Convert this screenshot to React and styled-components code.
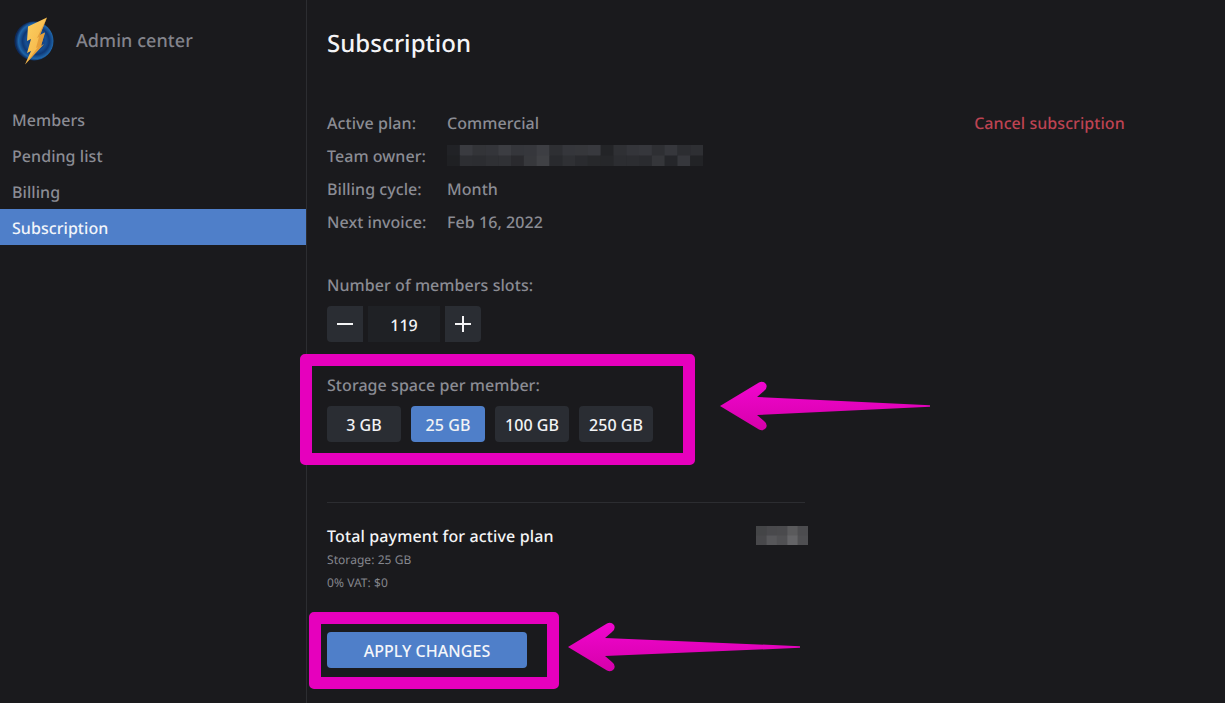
import React from 'react';
import styled, { createGlobalStyle } from 'styled-components';

const GlobalStyle = createGlobalStyle`
  html, body {
    margin: 0;
    padding: 0;
    height: 100%;
    background: #1a1a1d;
  }
  * {
    box-sizing: border-box;
  }
`;

const Page = styled.div`
  position: relative;
  display: flex;
  width: 1225px;
  height: 703px;
  overflow: hidden;
  background: #1a1a1d;
  color: #8b8c94;
  font-family: 'Noto Sans', 'Open Sans', sans-serif;
  font-size: 16px;
  font-weight: 500;
  letter-spacing: 0.06px;
  text-rendering: geometricPrecision;
`;

const Sidebar = styled.aside`
  width: 307px;
  flex: none;
  border-right: 1px solid #2c2d31;
`;

const Brand = styled.div`
  display: flex;
  align-items: center;
  gap: 20px;
  height: 101px;
  padding: 0 0 20px 12px;
`;

const BrandName = styled.span`
  font-size: 18px;
  color: #83848c;
`;

const NavItem = styled.div`
  height: 36px;
  line-height: 38px;
  padding-left: 12px;
  background: ${(p) => (p.$active ? '#4f7fc9' : 'transparent')};
  color: ${(p) => (p.$active ? '#f2f5fa' : '#8b8c94')};
`;

const Main = styled.main`
  position: relative;
  flex: 1;
  padding: 28px 0 0 20px;
`;

const Title = styled.h1`
  margin: 0 0 46px;
  font-size: 24px;
  line-height: 32px;
  font-weight: 500;
  color: #f4f4f6;
`;

const InfoRow = styled.div`
  display: flex;
  align-items: center;
  height: 33px;
`;

const InfoLabel = styled.span`
  width: 120px;
`;

const CancelLink = styled.a`
  margin-left: 435px;
  color: #bd4352;
`;

const SectionLabel = styled.div`
  height: 24px;
  line-height: 24px;
  margin-bottom: 9px;
`;

const Slots = styled.section`
  margin-top: 35px;
`;

const Stepper = styled.div`
  display: flex;
  gap: 5px;
`;

const StepButton = styled.button`
  display: flex;
  align-items: center;
  justify-content: center;
  width: 36px;
  height: 36px;
  padding: 0;
  border: none;
  background: #2a2d33;
  border-radius: ${(p) => (p.$side === 'left' ? '4px 0 0 4px' : '0 4px 4px 0')};
`;

const StepValue = styled.div`
  width: 72px;
  height: 36px;
  line-height: 38px;
  text-align: center;
  background: #1f2125;
  color: #f4f4f6;
`;

const Storage = styled.section`
  margin-top: 31px;
`;

const SizeRow = styled.div`
  display: flex;
  gap: 10px;
`;

const SizeButton = styled.button`
  width: 74px;
  height: 36px;
  padding: 2px 0 0;
  border: none;
  border-radius: 4px;
  font: inherit;
  letter-spacing: inherit;
  color: #f2f3f5;
  background: ${(p) => (p.$active ? '#4f7fc9' : '#2a2d33')};
`;

const Divider = styled.hr`
  width: 478px;
  height: 1px;
  margin: 60px 0 0;
  border: none;
  background: #2c2d31;
`;

const Total = styled.section`
  display: flex;
  justify-content: space-between;
  width: 481px;
  margin-top: 21px;
`;

const TotalTitle = styled.div`
  height: 24px;
  line-height: 24px;
  letter-spacing: 0.14px;
  color: #f4f4f6;
`;

const SmallLine = styled.div`
  height: 23px;
  line-height: 23px;
  font-size: 12px;
  font-weight: 400;
  color: #85868d;
`;

const ApplyButton = styled.button`
  display: block;
  width: 200px;
  height: 36px;
  margin-top: 38px;
  padding: 2px 0 0;
  border: none;
  border-radius: 4px;
  background: #4f7fc9;
  color: #f4f6fa;
  font: inherit;
  letter-spacing: inherit;
`;

const PriceSlot = styled.div`
  flex: none;
  padding-top: 2px;
`;

const Callout = styled.div`
  position: absolute;
  left: ${(p) => p.$x}px;
  top: ${(p) => p.$y}px;
  width: ${(p) => p.$w}px;
  height: ${(p) => p.$h}px;
  border: 12px solid #e600bd;
  border-radius: 5px;
  pointer-events: none;
`;

const ArrowMark = styled.svg`
  position: absolute;
  left: ${(p) => p.$x}px;
  top: ${(p) => p.$y}px;
`;

const Pixels = styled.svg`
  display: block;
  flex: none;
`;

const ownerPixels = [
  ['#212226', '#3a3b40', '#333438', '#34353a', '#3c3d42', '#35363b', '#36373c', '#3d3e43', '#2e2f33', '#35363b', '#36373b', '#38393e', '#232427', '#2f3034', '#34353a', '#36373c', '#2e2f33', '#36373c', '#2c2d31', '#2e2f33'],
  ['#1f2023', '#2d2e32', '#2c2d31', '#2f3034', '#303135', '#2a2a2e', '#37383c', '#404145', '#292a2e', '#2f3034', '#2a2b2f', '#27282b', '#26272a', '#2c2d31', '#2c2d31', '#2a2b2f', '#35363a', '#25262a', '#36373c', '#222326'],
];

const pricePixels = [
  ['#444547', '#49494c', '#4a4a4d', '#5a5a5c', '#4c4c4f'],
  ['#48484b', '#57575a', '#505053', '#646467', '#4f4f52'],
];

const PixelBlock = ({ rows, width, height }) => {
  const cols = rows[0].length;
  const cw = width / cols;
  const ch = height / rows.length;
  return (
    <Pixels width={width} height={height}>
      {rows.map((row, y) =>
        row.map((fill, x) => (
          <rect key={`${x}-${y}`} x={x * cw} y={y * ch} width={cw + 0.5} height={ch + 0.5} fill={fill} />
        ))
      )}
    </Pixels>
  );
};

const Logo = () => (
  <svg width="44" height="48" viewBox="0 0 44 48">
    <defs>
      <radialGradient id="globe" cx="0.55" cy="0.5" r="0.52">
        <stop offset="0" stopColor="#0c2a66" />
        <stop offset="0.5" stopColor="#174f93" />
        <stop offset="0.66" stopColor="#0f3875" />
        <stop offset="0.86" stopColor="#1f66aa" />
        <stop offset="1" stopColor="#0d2a5c" />
      </radialGradient>
      <linearGradient id="bolt" x1="0" y1="0" x2="1" y2="1">
        <stop offset="0" stopColor="#fcd263" />
        <stop offset="1" stopColor="#f3ad42" />
      </linearGradient>
    </defs>
    <circle cx="22" cy="24" r="19.5" fill="url(#globe)" />
    <path d="M16 9.5 L35 0.5 L28 18 L33 15.5 L29 29 L32 27 L13 47.5 L19 34 L15 36 L19 22 L15 24 Z" fill="url(#bolt)" />
    <path d="M35 0.5 L28 18 L33 15.5 L29 29 L32 27 L13 47.5 L26 30 L24 31 L27 20 L25 21 Z" fill="#d98a2c" opacity="0.6" />
  </svg>
);

const Arrow = ({ id, x, y, length }) => (
  <ArrowMark $x={x} $y={y} width={length} height="52" viewBox={`0 0 ${length} 52`}>
    <defs>
      <linearGradient id={id} x1="0" y1="0" x2="0" y2="1">
        <stop offset="0" stopColor="#f106cf" />
        <stop offset="1" stopColor="#d600aa" />
      </linearGradient>
    </defs>
    <path
      d={`M0 26 L39 2.5 Q43 0.5 46 4 Q48 8 44 11 L37 17 L${length} 25.2 V26.8 L37 35 L44 41 Q48 44 46 48 Q43 51.5 39 49.5 Z`}
      fill={`url(#${id})`}
    />
  </ArrowMark>
);

const nav = ['Members', 'Pending list', 'Billing', 'Subscription'];
const sizes = ['3 GB', '25 GB', '100 GB', '250 GB'];

const App = () => {
  return (
    <Page>
      <GlobalStyle />
      <Sidebar>
        <Brand>
          <Logo />
          <BrandName>Admin center</BrandName>
        </Brand>
        {nav.map((item) => (
          <NavItem key={item} $active={item === 'Subscription'}>
            {item}
          </NavItem>
        ))}
      </Sidebar>

      <Main>
        <Title>Subscription</Title>

        <InfoRow>
          <InfoLabel>Active plan:</InfoLabel>
          <span>Commercial</span>
          <CancelLink>Cancel subscription</CancelLink>
        </InfoRow>
        <InfoRow>
          <InfoLabel>Team owner:</InfoLabel>
          <PixelBlock rows={ownerPixels} width={256} height={21} />
        </InfoRow>
        <InfoRow>
          <InfoLabel>Billing cycle:</InfoLabel>
          <span>Month</span>
        </InfoRow>
        <InfoRow>
          <InfoLabel>Next invoice:</InfoLabel>
          <span>Feb 16, 2022</span>
        </InfoRow>

        <Slots>
          <SectionLabel>Number of members slots:</SectionLabel>
          <Stepper>
            <StepButton $side="left">
              <svg width="16" height="16" viewBox="0 0 16 16">
                <path d="M0 8H16" stroke="#f4f4f6" strokeWidth="2" />
              </svg>
            </StepButton>
            <StepValue>119</StepValue>
            <StepButton $side="right">
              <svg width="16" height="16" viewBox="0 0 16 16">
                <path d="M0 8H16M8 0V16" stroke="#f4f4f6" strokeWidth="2" />
              </svg>
            </StepButton>
          </Stepper>
        </Slots>

        <Storage>
          <SectionLabel>Storage space per member:</SectionLabel>
          <SizeRow>
            {sizes.map((size) => (
              <SizeButton key={size} $active={size === '25 GB'}>
                {size}
              </SizeButton>
            ))}
          </SizeRow>
        </Storage>

        <Divider />

        <Total>
          <div>
            <TotalTitle>Total payment for active plan</TotalTitle>
            <SmallLine>Storage: 25 GB</SmallLine>
            <SmallLine>0% VAT: $0</SmallLine>
          </div>
          <PriceSlot>
            <PixelBlock rows={pricePixels} width={52} height={19} />
          </PriceSlot>
        </Total>

        <ApplyButton>APPLY CHANGES</ApplyButton>
      </Main>

      <Callout $x={300} $y={354} $w={395} $h={111} />
      <Callout $x={309} $y={612} $w={250} $h={77} />
      <Arrow id="arrowTop" x={720} y={380} length={210} />
      <Arrow id="arrowBottom" x={568} y={621} length={232} />
    </Page>
  );
};

export default App;
